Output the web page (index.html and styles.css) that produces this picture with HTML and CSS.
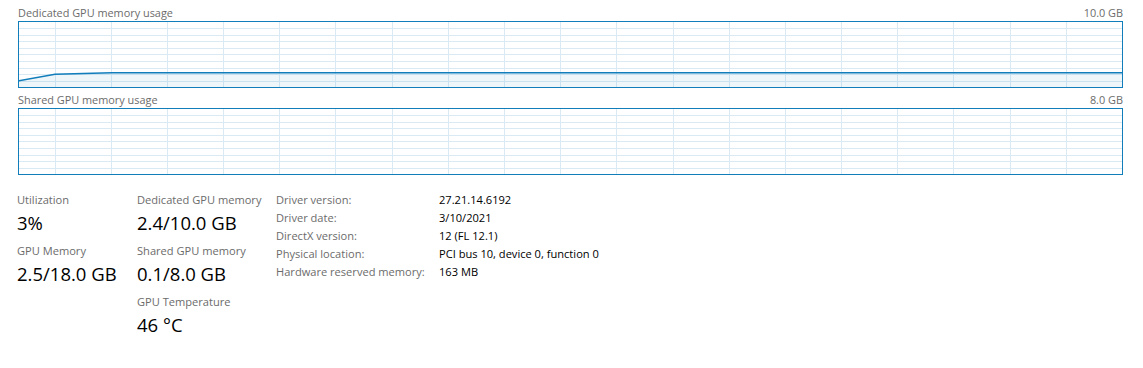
FILE: index.html
```html
<!DOCTYPE html>
<html lang="en">
<head>
  <meta charset="UTF-8" />
  <title>GPU</title>
  <link rel="stylesheet" href="styles.css">
</head>
<body>
  <div class="page">
    <div class="graph-head">
      <span>Dedicated GPU memory usage</span>
      <span>10.0 GB</span>
    </div>
    <div class="graph">
      <svg id="dedicated" width="1103" height="65" viewBox="0 0 1103 65"></svg>
    </div>

    <div class="graph-head second">
      <span>Shared GPU memory usage</span>
      <span>8.0 GB</span>
    </div>
    <div class="graph">
      <svg id="shared" width="1103" height="65" viewBox="0 0 1103 65"></svg>
    </div>

    <div class="stats">
      <div class="col">
        <div class="stat">
          <div class="label">Utilization</div>
          <div class="value">3%</div>
        </div>
        <div class="stat">
          <div class="label">GPU Memory</div>
          <div class="value">2.5/18.0 GB</div>
        </div>
      </div>
      <div class="col">
        <div class="stat">
          <div class="label">Dedicated GPU memory</div>
          <div class="value">2.4/10.0 GB</div>
        </div>
        <div class="stat">
          <div class="label">Shared GPU memory</div>
          <div class="value">0.1/8.0 GB</div>
        </div>
        <div class="stat">
          <div class="label">GPU Temperature</div>
          <div class="value">46 °C</div>
        </div>
      </div>
      <div class="info">
        <span class="key">Driver version:</span><span>27.21.14.6192</span>
        <span class="key">Driver date:</span><span>3/10/2021</span>
        <span class="key">DirectX version:</span><span>12 (FL 12.1)</span>
        <span class="key">Physical location:</span><span>PCI bus 10, device 0, function 0</span>
        <span class="key">Hardware reserved memory:</span><span>163 MB</span>
      </div>
    </div>
  </div>

  <script>
    const NS = 'http://www.w3.org/2000/svg';

    function el(svg, tag, attrs) {
      const node = document.createElementNS(NS, tag);
      for (const k in attrs) node.setAttribute(k, attrs[k]);
      svg.appendChild(node);
      return node;
    }

    function drawGrid(svg) {
      for (let k = 1; k < 10; k++) {
        const y = Math.round(6.55 * k - 0.3) + 0.5;
        el(svg, 'line', { x1: 0, x2: 1103, y1: y, y2: y, class: 'grid' });
      }
      for (let j = 1; j < 20; j++) {
        const x = Math.round(1103 - 56.18 * j) + 0.5;
        el(svg, 'line', { x1: x, x2: x, y1: 0, y2: 65, class: 'grid' });
      }
    }

    function drawUsage(svg, points) {
      const d = points.map((p, i) => (i ? 'L' : 'M') + p[0] + ' ' + p[1]).join(' ');
      const last = points[points.length - 1];
      el(svg, 'path', { d: d + ' L' + last[0] + ' 66 L' + points[0][0] + ' 66 Z', class: 'fill' });
      el(svg, 'path', { d: d, class: 'line' });
    }

    const dedicated = document.getElementById('dedicated');
    drawGrid(dedicated);
    drawUsage(dedicated, [[-1, 59], [36, 52.3], [93, 50.8], [1104, 50.8]]);

    drawGrid(document.getElementById('shared'));
  </script>
</body>
</html>
```

FILE: styles.css
```css
* { box-sizing: border-box; }

body {
  background: #fff;
  color: #000;
  font-family: "Open Sans", sans-serif;
  margin: 0;
  padding: 0;
}

.page {
  padding: 4px 20px 0 18px;
}

.graph-head {
  display: flex;
  justify-content: space-between;
  height: 17px;
  line-height: 17px;
  font-size: 10.9px;
  color: #6b6b6b;
}

.graph-head.second {
  margin-top: 3px;
}

.graph {
  width: 1105px;
  height: 67px;
  border: 1px solid #117dbb;
}

.graph svg {
  display: block;
}

.grid {
  stroke: #d9eaf4;
  stroke-width: 1;
}

.fill {
  fill: rgba(17, 125, 187, 0.07);
}

.line {
  fill: none;
  stroke: #117dbb;
  stroke-width: 1.5;
}

.stats {
  display: flex;
  margin-top: 17px;
  margin-left: -1px;
}

.col {
  display: flex;
  flex-direction: column;
}

.col:first-child {
  width: 120px;
}

.col:nth-child(2) {
  width: 139px;
}

.stat {
  margin-bottom: 8px;
}

.label {
  font-size: 11.1px;
  line-height: 16px;
  color: #6b6b6b;
}

.value {
  font-size: 18.5px;
  line-height: 24px;
  margin-top: 3px;
}

.info {
  display: grid;
  grid-template-columns: 163px auto;
  grid-auto-rows: 18px;
  align-content: start;
  margin-top: -1px;
  font-size: 11.1px;
  line-height: 18px;
}

.info .key {
  color: #6b6b6b;
}
```
